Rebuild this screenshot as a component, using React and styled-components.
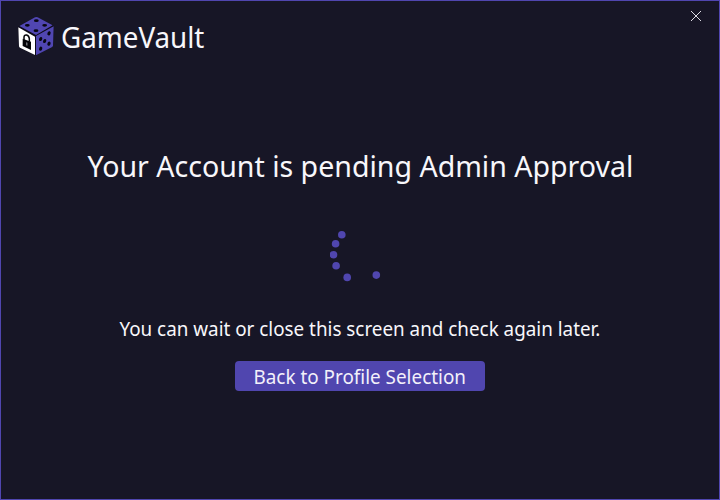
import React from "react";
import styled, { createGlobalStyle } from "styled-components";

const GlobalStyle = createGlobalStyle`
  body { margin: 0; background: #171626; }
  * { box-sizing: border-box; }
`;

const Window = styled.main`
  display: flex;
  flex-direction: column;
  width: 720px;
  height: 500px;
  border: 1px solid #5046af;
  background: #171626;
  color: #f8f7fb;
  font-family: "Noto Sans", "Open Sans", sans-serif;
  overflow: hidden;
`;

const Header = styled.header`
  display: flex;
  justify-content: space-between;
  height: 70px;
  padding: 9px 17px 0 15px;
`;

const Brand = styled.div`
  display: flex;
  align-items: flex-start;
  gap: 5px;
  padding-top: 5px;
`;

const Logo = styled.svg`
  width: 40px;
  height: 42px;
`;

const Text = styled.span`
  display: block;
  white-space: nowrap;
  font-size: ${(p) => p.$size}px;
  line-height: 40px;
  transform: scaleX(${(p) => p.$stretch});
  transform-origin: ${(p) => p.$origin || "center"};
`;

const BrandName = styled.div`
  padding-top: 2px;
`;

const CloseButton = styled.button`
  display: flex;
  width: 12px;
  height: 12px;
  padding: 0;
  border: 0;
  background: none;
  color: #dddce4;
`;

const Content = styled.section`
  display: flex;
  flex-direction: column;
  align-items: center;
`;

const Title = styled.h1`
  margin: 75px 0 0;
  height: 40px;
  font-weight: 400;
`;

const Spinner = styled.svg`
  width: 60px;
  height: 60px;
  margin-top: 39px;
`;

const Message = styled.p`
  margin: 24px 0 0;
  height: 40px;
`;

const BackButton = styled.button`
  display: flex;
  align-items: center;
  justify-content: center;
  width: 250px;
  height: 30px;
  margin-top: 12px;
  padding: 2px 0 0;
  border: 0;
  border-radius: 4px;
  background: #5046af;
  color: #f3f1fa;
  font-family: inherit;
`;

const topPips = [[61, 17], [34, 31], [86, 31], [60, 47]];
const sidePips = [[99, 55], [74, 72], [86, 78], [99, 86], [74, 101]];
const dots = [[11.8, 9.8], [5.6, 18.8], [3.5, 29.7], [6.1, 40.8], [17.2, 52.4], [46.3, 50.1]];

export default function App() {
  return (
    <>
      <GlobalStyle />
      <Window>
        <Header>
          <Brand>
            <Logo viewBox="0 0 120 126" aria-hidden="true">
              <path d="M61 5 L111 31 Q114 33 113 37 L110 94 L61 121 Q58 122 55 120 L11 98 L6 38 Q6 34 10 32Z" fill="#0d0b18" />
              <path d="M57 7 Q61 5 65 7 L110 31 L60 60 L10 33Z" fill="#5046b2" />
              <path d="M60 63 L113 34 L111 92 Q110 95 107 97 L60 121Z" fill="#5046b2" />
              <path d="M7 37 L57 65 L57 120 L12 98 Q9 96 9 93Z" fill="#fff" />
              {topPips.map(([x, y]) => (
                <ellipse key={`${x}-${y}`} cx={x} cy={y} rx="7.2" ry="4.2" fill="#080711" />
              ))}
              {sidePips.map(([x, y]) => (
                <ellipse key={`${x}-${y}`} cx={x} cy={y} rx="4.7" ry="6.4" transform={`rotate(22 ${x} ${y})`} fill="#080711" />
              ))}
              <path d="M24 76 V67 C24 55 39 59 40 71 V80" fill="none" stroke="#050508" strokeWidth="4.5" />
              <path d="M20 71 L45 80 V105 L20 93Z" fill="#050508" />
              <path d="M31 82 L34 83 V92 L31 91Z" fill="#a5a5ad" />
            </Logo>
            <BrandName>
              <Text $size={29} $stretch={0.957} $origin="left">GameVault</Text>
            </BrandName>
          </Brand>
          <CloseButton aria-label="Close">
            <svg width="12" height="12" viewBox="0 0 12 12">
              <path d="M1 1 L11 11 M11 1 L1 11" stroke="currentColor" strokeWidth="1" />
            </svg>
          </CloseButton>
        </Header>
        <Content>
          <Title><Text $size={29} $stretch={0.984}>Your Account is pending Admin Approval</Text></Title>
          <Spinner viewBox="0 0 60 60" role="status" aria-label="Waiting">
            {dots.map(([x, y]) => (
              <circle key={x} cx={x} cy={y} r="3.8" fill="#5046af" />
            ))}
          </Spinner>
          <Message><Text $size={19.5} $stretch={0.966}>You can wait or close this screen and check again later.</Text></Message>
          <BackButton><Text $size={19.5} $stretch={0.968}>Back to Profile Selection</Text></BackButton>
        </Content>
      </Window>
    </>
  );
}
